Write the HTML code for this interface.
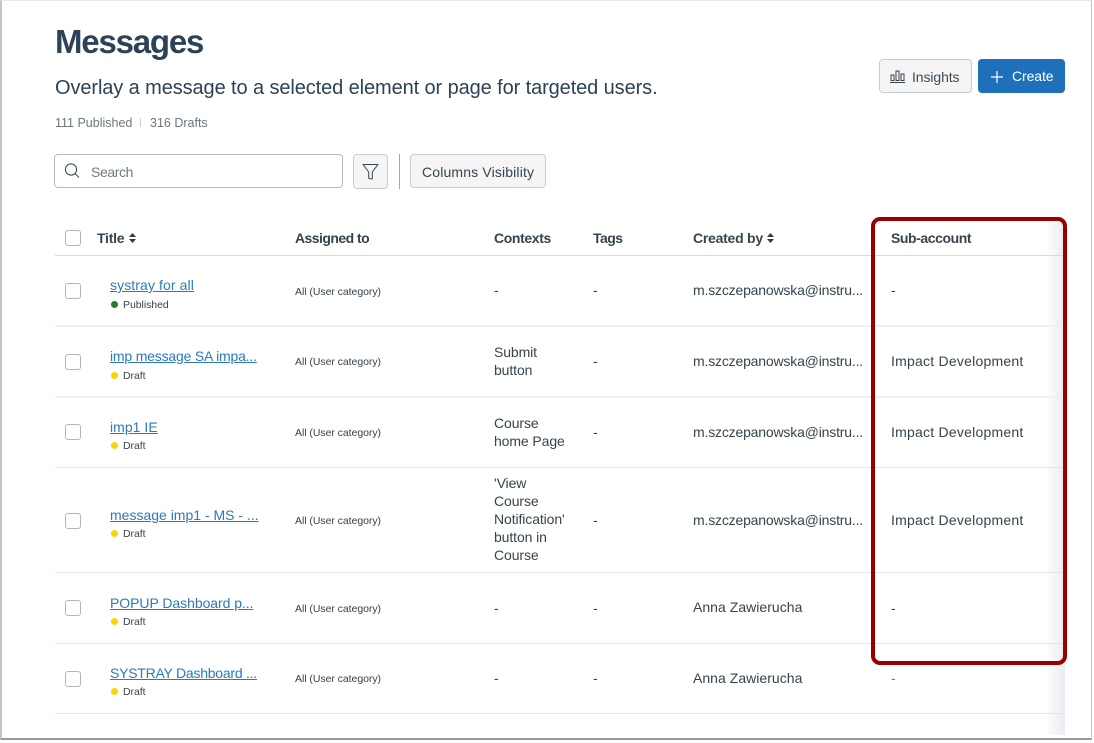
<!DOCTYPE html>
<html><head><meta charset="utf-8">
<style>
html,body{margin:0;padding:0;background:#fff}
body{width:1094px;height:743px;position:relative;overflow:hidden;font-family:"Liberation Sans",sans-serif;color:#2d3b45}
.a{position:absolute;white-space:nowrap}
.t{font-size:14px;line-height:18px;letter-spacing:-.1px;color:#35444e}
.imp{letter-spacing:.23px}
.em{letter-spacing:-.18px}
.an{letter-spacing:.03px}
.h{font-size:14px;line-height:18px;font-weight:bold;letter-spacing:-.25px;color:#35444e}
.s{font-size:10.5px;line-height:14px;letter-spacing:-.05px;color:#35444e}
.l{font-size:14px;line-height:18px;color:#2b7abc;text-decoration:underline;letter-spacing:-.1px}
.line{position:absolute;left:55px;width:1010px;height:1px;background:#e4e5e6}
.cb{position:absolute;left:65px;width:14px;height:14px;border:1px solid #b0b6bb;border-radius:3px;background:#fff}
.dot{position:absolute;left:111px;width:7px;height:7px;border-radius:50%;background:#fcd500}
.btn{position:absolute;box-sizing:border-box;background:#f5f5f5;border:1px solid #c7cdd1;border-radius:4px}
</style></head><body>
<div class="a" style="left:0;top:0;width:1092px;height:740px;box-sizing:border-box;border-left:2px solid #c4c4c4;border-top:1px solid #e8e8e8;border-right:1px solid #c4c4c4;border-bottom:2px solid #999"></div>

<div class="a" style="left:55px;top:22px;font-size:33px;line-height:40px;font-weight:bold;color:#2b4257;letter-spacing:-1.2px">Messages</div>
<div class="a" style="left:55px;top:76px;font-size:20px;line-height:24px;color:#2b4257;letter-spacing:-.1px">Overlay a message to a selected element or page for targeted users.</div>
<div class="a" style="left:55px;top:116px;font-size:12.5px;line-height:15px;color:#6b7780">111 Published</div>
<div class="a" style="left:140px;top:118px;width:1px;height:9px;background:#c7cdd1"></div>
<div class="a" style="left:150px;top:116px;font-size:12.5px;line-height:15px;color:#6b7780">316 Drafts</div>

<div class="btn" style="left:54px;top:154px;width:289px;height:34px;background:#fff;border-color:#b4babe"></div>
<svg class="a" style="left:64px;top:162px" width="16" height="17" viewBox="0 0 16 17" fill="none" stroke="#35444e" stroke-width="1"><circle cx="7" cy="7.500" r="5.600"/><path d="M11 11.500l4 4"/></svg>
<div class="a t" style="left:91px;top:163px;color:#6f7b84;letter-spacing:-.4px">Search</div>

<div class="btn" style="left:353px;top:154px;width:35px;height:35px"></div>
<svg class="a" style="left:362px;top:163px" width="17" height="17" viewBox="0 0 17 17" fill="none" stroke="#35444e" stroke-width="1"><path d="M1 1.500h15L10.300 9v6.800H7.700l-1-.8V9z" stroke-linejoin="round"/></svg>
<div class="a" style="left:399px;top:154px;width:1px;height:35px;background:#a0a8ad"></div>
<div class="btn" style="left:410px;top:154px;width:136px;height:34px"></div>
<div class="a t" style="left:422px;top:163px;letter-spacing:.15px">Columns Visibility</div>

<div class="btn" style="left:879px;top:59px;width:93px;height:34px"></div>
<svg class="a" style="left:890px;top:69px" width="15" height="14" viewBox="0 0 15 14" fill="none" stroke="#35444e" stroke-width="1"><path d="M0 13.500h15M1 6h3v5.500H1zM6 2h3v9.500H6zM11 5h3v6.500h-3z"/></svg>
<div class="a t" style="left:912px;top:68px;color:#3b4a54;letter-spacing:-.1px">Insights</div>
<div class="a" style="left:978px;top:59px;width:87px;height:34px;background:#1f70bb;border-radius:4px"></div>
<svg class="a" style="left:991px;top:71px" width="12" height="12" viewBox="0 0 12 12" stroke="#fff" stroke-width="1.200"><path d="M6 0v12M0 6h12"/></svg>
<div class="a t" style="left:1012px;top:67px;color:#fff;letter-spacing:-.1px">Create</div>

<!-- right fade -->
<div class="a" style="left:1045px;top:222px;width:20px;height:513px;background:linear-gradient(90deg,rgba(232,235,241,0),#e8ebf1)"></div>

<!-- header -->
<div class="cb" style="top:230px"></div>
<div class="a h" style="left:97px;top:229px">Title</div>
<svg class="a" style="left:129px;top:233px" width="7" height="10" viewBox="0 0 7 10" fill="#2d3b45"><path d="M3.500 0L7 4H0zM3.500 10L0 6h7z"/></svg>
<div class="a h" style="left:295px;top:229px;letter-spacing:-.55px">Assigned to</div>
<div class="a h" style="left:494px;top:229px;letter-spacing:-.37px">Contexts</div>
<div class="a h" style="left:593px;top:229px;letter-spacing:-.55px">Tags</div>
<div class="a h" style="left:693px;top:229px">Created by</div>
<svg class="a" style="left:767px;top:233px" width="7" height="10" viewBox="0 0 7 10" fill="#2d3b45"><path d="M3.500 0L7 4H0zM3.500 10L0 6h7z"/></svg>
<div class="a h" style="left:891px;top:229px;letter-spacing:-.43px">Sub-account</div>

<div class="line" style="top:255px;background:#d9dcde"></div>
<div class="line" style="top:325px;height:2px;background:#f0f0f1"></div>
<div class="line" style="top:396px;height:2px;background:#f0f0f1"></div>
<div class="line" style="top:467px"></div>
<div class="line" style="top:572px"></div>
<div class="line" style="top:643px"></div>
<div class="line" style="top:713px"></div>

<!-- row 1 -->
<div class="cb" style="top:283px"></div>
<div class="a l" style="left:110px;top:276px;letter-spacing:.1px">systray for all</div>
<div class="dot" style="top:301px;background:#2a7a36"></div>
<div class="a s" style="left:123px;top:298px">Published</div>
<div class="a s" style="left:295px;top:285px">All (User category)</div>
<div class="a t" style="left:494px;top:281px">-</div>
<div class="a t" style="left:593px;top:281px">-</div>
<div class="a t em" style="left:693px;top:281px">m.szczepanowska@instru...</div>
<div class="a t" style="left:891px;top:281px">-</div>

<!-- row 2 -->
<div class="cb" style="top:354px"></div>
<div class="a l" style="left:110px;top:347px;letter-spacing:-.19px">imp message SA impa...</div>
<div class="dot" style="top:372px"></div>
<div class="a s" style="left:123px;top:369px">Draft</div>
<div class="a s" style="left:295px;top:355px">All (User category)</div>
<div class="a t" style="left:494px;top:343px">Submit<br>button</div>
<div class="a t" style="left:593px;top:352px">-</div>
<div class="a t em" style="left:693px;top:352px">m.szczepanowska@instru...</div>
<div class="a t imp" style="left:891px;top:352px">Impact Development</div>

<!-- row 3 -->
<div class="cb" style="top:424px"></div>
<div class="a l" style="left:110px;top:418px;letter-spacing:.04px">imp1 IE</div>
<div class="dot" style="top:442px"></div>
<div class="a s" style="left:123px;top:439px">Draft</div>
<div class="a s" style="left:295px;top:426px">All (User category)</div>
<div class="a t" style="left:494px;top:414px">Course<br>home Page</div>
<div class="a t" style="left:593px;top:423px">-</div>
<div class="a t em" style="left:693px;top:423px">m.szczepanowska@instru...</div>
<div class="a t imp" style="left:891px;top:423px">Impact Development</div>

<!-- row 4 -->
<div class="cb" style="top:513px"></div>
<div class="a l" style="left:110px;top:506px;letter-spacing:0">message imp1 - MS - ...</div>
<div class="dot" style="top:530px"></div>
<div class="a s" style="left:123px;top:527px">Draft</div>
<div class="a s" style="left:295px;top:514px">All (User category)</div>
<div class="a t" style="left:494px;top:474px">'View<br>Course<br>Notification'<br>button in<br>Course</div>
<div class="a t" style="left:593px;top:511px">-</div>
<div class="a t em" style="left:693px;top:511px">m.szczepanowska@instru...</div>
<div class="a t imp" style="left:891px;top:511px">Impact Development</div>

<!-- row 5 -->
<div class="cb" style="top:600px"></div>
<div class="a l" style="left:110px;top:594px;letter-spacing:-.05px">POPUP Dashboard p...</div>
<div class="dot" style="top:618px"></div>
<div class="a s" style="left:123px;top:615px">Draft</div>
<div class="a s" style="left:295px;top:602px">All (User category)</div>
<div class="a t" style="left:494px;top:599px">-</div>
<div class="a t" style="left:593px;top:599px">-</div>
<div class="a t an" style="left:693px;top:598px">Anna Zawierucha</div>
<div class="a t" style="left:891px;top:599px">-</div>

<!-- row 6 -->
<div class="cb" style="top:671px"></div>
<div class="a l" style="left:110px;top:664px;letter-spacing:-.24px">SYSTRAY Dashboard ...</div>
<div class="dot" style="top:688px"></div>
<div class="a s" style="left:123px;top:685px">Draft</div>
<div class="a s" style="left:295px;top:672px">All (User category)</div>
<div class="a t" style="left:494px;top:669px">-</div>
<div class="a t" style="left:593px;top:669px">-</div>
<div class="a t an" style="left:693px;top:669px">Anna Zawierucha</div>
<div class="a t" style="left:891px;top:669px;color:#6f7b84">-</div>

<!-- highlight -->
<div class="a" style="left:871px;top:217px;width:196px;height:448px;box-sizing:border-box;border:4px solid #990000;border-radius:9px"></div>
</body></html>
